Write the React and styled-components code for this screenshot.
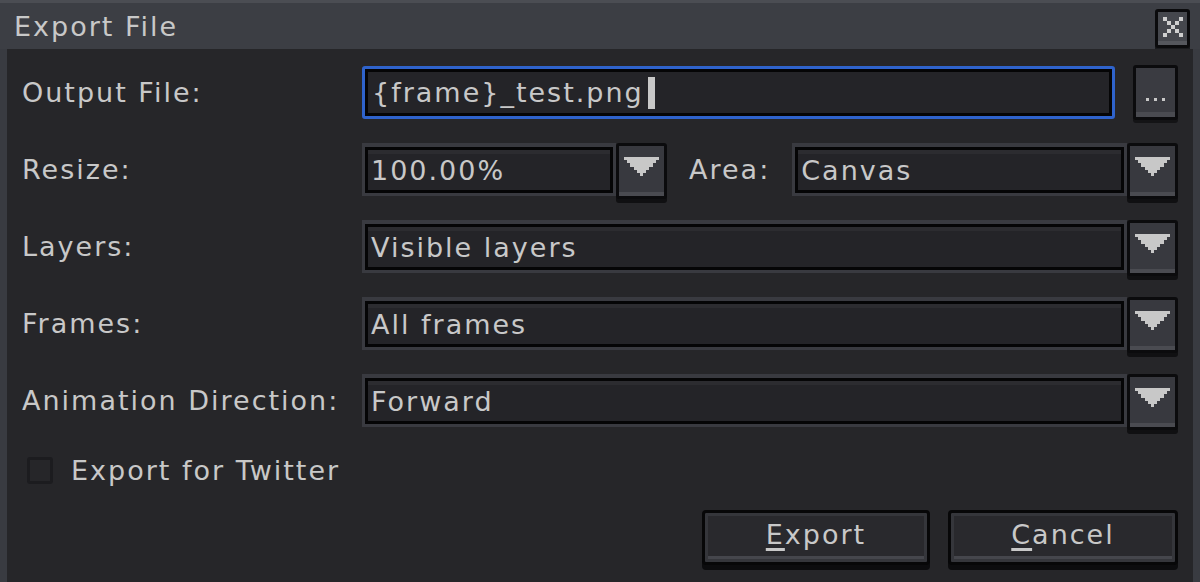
import React from 'react';
import styled, { createGlobalStyle } from 'styled-components';

const Global = createGlobalStyle`
  html, body { margin: 0; padding: 0; background: #262629; }
  body { font-family: "DejaVu Sans", "Liberation Sans", sans-serif; }
`;

const Window = styled.div`
  width: 1200px;
  height: 582px;
  display: flex;
  flex-direction: column;
  overflow: hidden;
  color: #c8c8c8;
  font-size: 27px;
  letter-spacing: 2px;
`;

const TitleBar = styled.div`
  height: 46px;
  border-top: 3px solid #4b4d53;
  background: #3c3e44;
  display: flex;
  align-items: center;
  justify-content: space-between;
  padding: 0 10px 0 14px;
`;

const Title = styled.span`
  margin-top: 1px;
`;

const CloseButton = styled.div`
  width: 29px;
  height: 30px;
  margin-top: 5px;
  border: 3px solid #0b0b0d;
  border-radius: 3px;
  background: #45474d;
  box-shadow: inset 0 -4px 0 #55575d, 0 4px 0 #1a1b1e;
  display: flex;
  align-items: center;
  justify-content: center;
  padding-bottom: 3px;
`;

const Body = styled.div`
  flex: 1;
  background: #262629;
  border-left: 7px solid #393b41;
  border-right: 7px solid #393b41;
  padding: 5px 15px 0 15px;
  display: grid;
  grid-template-columns: 340px 1fr;
  grid-template-rows: repeat(5, 77px) 62px auto;
  align-items: center;
  align-content: start;
`;

const Label = styled.div`
  white-space: nowrap;
`;

const FieldRow = styled.div`
  display: flex;
  align-items: center;
  gap: ${p => p.$gap || 0}px;
`;

const TextInput = styled.div`
  flex: 1;
  height: 53px;
  box-sizing: border-box;
  border: 3px solid #2f63cc;
  border-radius: 3px;
  box-shadow: inset 0 0 0 3px #050506;
  background: #242428;
  display: flex;
  align-items: center;
  padding-left: 7px;
  white-space: nowrap;
`;

const Cursor = styled.span`
  display: inline-block;
  width: 7px;
  height: 32px;
  margin-left: 4px;
  background: #c8c8c8;
`;

const SmallButton = styled.div`
  width: 45px;
  height: 55px;
  box-sizing: border-box;
  border: 3px solid #0b0b0d;
  border-radius: 3px;
  background: #3a3b41;
  box-shadow: inset 0 -5px 0 #4a4b51, 0 3px 0 #141416;
  display: flex;
  align-items: flex-end;
  justify-content: center;
  gap: 5px;
  padding-bottom: 16px;
`;

const Dot = styled.span`
  width: 3px;
  height: 3px;
  background: #c8c8c8;
`;

const Combo = styled.div`
  display: flex;
  align-items: center;
  flex: ${p => (p.$width ? '0 0 auto' : 1)};
  width: ${p => (p.$width ? `${p.$width}px` : 'auto')};
`;

const Entry = styled.div`
  flex: 1;
  height: 53px;
  box-sizing: border-box;
  border: 3px solid #393a40;
  border-top-width: 4px;
  box-shadow: inset 0 0 0 3px #050506, inset 0 4px 0 3px #2c2c30;
  background: #242428;
  display: flex;
  align-items: center;
  padding-left: 6px;
  white-space: nowrap;
`;

const DropButton = styled.div`
  width: 51px;
  height: 56px;
  box-sizing: border-box;
  border: 3px solid #0b0b0d;
  border-radius: 3px;
  background: #38393f;
  box-shadow: inset 0 -4px 0 #4a4b51, 0 4px 0 #101012;
  display: flex;
  align-items: center;
  justify-content: center;
  padding-bottom: 8px;
  margin-top: 2px;
`;

const AreaLabel = styled.div`
  margin: 0 22px 0 22px;
`;

const CheckRow = styled.div`
  grid-column: 1 / 3;
  display: flex;
  align-items: center;
  gap: 18px;
  padding-left: 5px;
`;

const CheckBox = styled.div`
  width: 26px;
  height: 27px;
  box-sizing: border-box;
  border: 3px solid #1c1c1f;
  border-radius: 3px;
  background: #262629;
`;

const ButtonBar = styled.div`
  grid-column: 1 / 3;
  align-self: start;
  margin-top: 9px;
  display: flex;
  justify-content: flex-end;
  gap: 18px;
`;

const PushButton = styled.div`
  width: ${p => p.$width}px;
  height: 55px;
  box-sizing: border-box;
  border: 3px solid #070708;
  border-radius: 4px;
  background: #29292d;
  box-shadow: inset 0 0 0 3px #35363b, inset 0 -6px 0 #45464c, 0 5px 0 #0c0c0e;
  display: flex;
  align-items: center;
  justify-content: center;
  padding-bottom: 6px;
`;

const Mnemonic = styled.span`
  text-decoration: underline;
  text-underline-offset: 4px;
  text-decoration-thickness: 3px;
`;

function XIcon() {
  const cells = [[0, 0], [4, 0], [1, 1], [3, 1], [2, 2], [1, 3], [3, 3], [0, 4], [4, 4]];
  return (
    <svg width="20" height="20" viewBox="0 0 5 5" shapeRendering="crispEdges">
      {cells.map(([x, y]) => <rect key={x + '-' + y} x={x} y={y} width="1" height="1" fill="#cfcfcf" />)}
    </svg>
  );
}

function Arrow() {
  return (
    <svg width="35" height="19" viewBox="0 0 11 6" shapeRendering="crispEdges">
      <polygon fill="#c8c8c8" points="0,0 11,0 11,1 10,1 10,2 9,2 9,3 8,3 8,4 7,4 7,5 6,5 6,6 5,6 5,5 4,5 4,4 3,4 3,3 2,3 2,2 1,2 1,1 0,1" />
    </svg>
  );
}

function ComboBox({ value, width }) {
  return (
    <Combo $width={width}>
      <Entry>{value}</Entry>
      <DropButton><Arrow /></DropButton>
    </Combo>
  );
}

export default function App() {
  return (
    <Window>
      <Global />
      <TitleBar>
        <Title>Export File</Title>
        <CloseButton><XIcon /></CloseButton>
      </TitleBar>
      <Body>
        <Label>Output File:</Label>
        <FieldRow $gap={18}>
          <TextInput>{'{frame}_test.png'}<Cursor /></TextInput>
          <SmallButton><Dot /><Dot /><Dot /></SmallButton>
        </FieldRow>

        <Label>Resize:</Label>
        <FieldRow>
          <ComboBox value="100.00%" width={305} />
          <AreaLabel>Area:</AreaLabel>
          <ComboBox value="Canvas" />
        </FieldRow>

        <Label>Layers:</Label>
        <ComboBox value="Visible layers" />

        <Label>Frames:</Label>
        <ComboBox value="All frames" />

        <Label>Animation Direction:</Label>
        <ComboBox value="Forward" />

        <CheckRow>
          <CheckBox />
          <span>Export for Twitter</span>
        </CheckRow>

        <ButtonBar>
          <PushButton $width={228}><Mnemonic>E</Mnemonic>xport</PushButton>
          <PushButton $width={230}><Mnemonic>C</Mnemonic>ancel</PushButton>
        </ButtonBar>
      </Body>
    </Window>
  );
}
